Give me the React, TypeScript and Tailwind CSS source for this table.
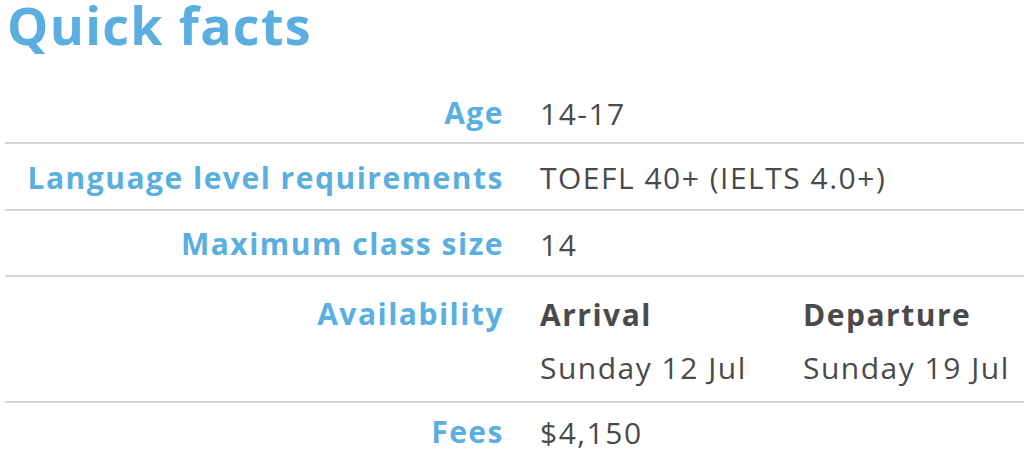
const rows = [
  { label: 'Age', value: '14-17', cls: 'h-[64px] pt-[4px]' },
  { label: 'Language level requirements', value: 'TOEFL 40+ (IELTS 4.0+)', cls: 'h-[67px] pt-[2px]' },
  { label: 'Maximum class size', value: '14', cls: 'h-[66px] pt-[2px]' },
];

const Label: React.FC<{ text: string }> = ({ text }) => (
  <div className="w-[535px] shrink-0 pr-[36px] text-right text-[30px] font-bold leading-[52px] tracking-[1.5px] text-[#5aafe0]">
    {text}
  </div>
);

export default function App() {
  return (
    <div className="h-[467px] w-[1024px] overflow-hidden bg-white font-['Open_Sans',sans-serif]">
      <h1 className="pl-[7px] text-[52px] font-bold leading-[50px] tracking-[1.3px] text-[#5aafe0]">
        Quick facts
      </h1>

      <div className="ml-[5px] mt-[30px]">
        {rows.map((row) => (
          <div
            key={row.label}
            className={`flex ${row.cls} items-center border-b-2 border-[#d6d6d6]`}
          >
            <Label text={row.label} />
            <div className="text-[30px] tracking-[1.5px] text-[#4a4a4a]">{row.value}</div>
          </div>
        ))}

        <div className="flex h-[126px] border-b-2 border-[#d6d6d6] pt-[11px]">
          <Label text="Availability" />
          <div className="flex text-[30px] leading-[53px] tracking-[1.5px] text-[#4a4a4a]">
            <div className="w-[263px]">
              <div className="font-bold">Arrival</div>
              <div>Sunday 12 Jul</div>
            </div>
            <div>
              <div className="font-bold">Departure</div>
              <div>Sunday 19 Jul</div>
            </div>
          </div>
        </div>

        <div className="flex h-[58px] items-center">
          <Label text="Fees" />
          <div className="text-[30px] tracking-[1.5px] text-[#4a4a4a]">$4,150</div>
        </div>
      </div>
    </div>
  );
}
